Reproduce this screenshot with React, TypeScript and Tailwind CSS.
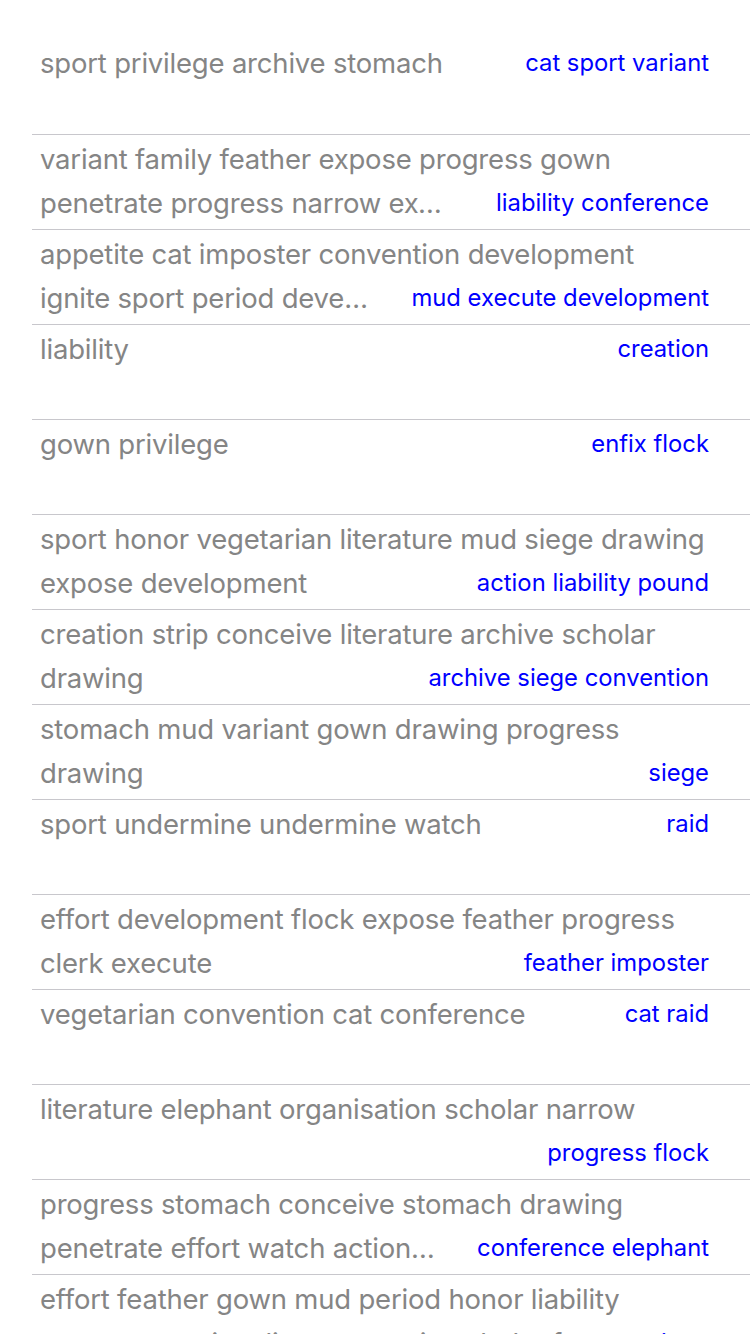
type Row = { lines: string[]; value: string };

const rows: Row[] = [
  { lines: ["sport privilege archive stomach"], value: "cat sport variant" },
  { lines: ["variant family feather expose progress gown", "penetrate progress narrow execute"], value: "liability conference" },
  { lines: ["appetite cat imposter convention development", "ignite sport period development"], value: "mud execute development" },
  { lines: ["liability"], value: "creation" },
  { lines: ["gown privilege"], value: "enfix flock" },
  { lines: ["sport honor vegetarian literature mud siege drawing", "expose development"], value: "action liability pound" },
  { lines: ["creation strip conceive literature archive scholar", "drawing"], value: "archive siege convention" },
  { lines: ["stomach mud variant gown drawing progress", "drawing"], value: "siege" },
  { lines: ["sport undermine undermine watch"], value: "raid" },
  { lines: ["effort development flock expose feather progress", "clerk execute"], value: "feather imposter" },
  { lines: ["vegetarian convention cat conference"], value: "cat raid" },
  { lines: ["literature elephant organisation scholar narrow", ""], value: "progress flock" },
  { lines: ["progress stomach conceive stomach drawing", "penetrate effort watch action siege"], value: "conference elephant" },
  { lines: ["effort feather gown mud period honor liability", "penetrate variant literature strip scholar feather"], value: "siege" },
];

function ListRow({ row, first }: { row: Row; first: boolean }) {
  const last = row.lines[row.lines.length - 1];
  const head = row.lines.slice(0, -1);
  return (
    <div
      className={
        "h-[95px] ml-8 pl-2 pr-[41px] pt-[2px] " + (first ? "" : "border-t border-[#c8c7cc]")
      }
    >
      {head.map((l) => (
        <div key={l} className="truncate text-[27.5px] leading-[44px] text-[#858585] tracking-[-0.2px]">
          {l}
        </div>
      ))}
      <div className="flex items-end h-11">
        <span className="flex-1 min-w-0 truncate text-[27.5px] leading-[44px] text-[#858585] tracking-[-0.2px]">
          {last}
        </span>
        <span className="shrink-0 ml-10 text-[23.8px] leading-[44px] text-[#0000ff]">
          {row.value}
        </span>
      </div>
    </div>
  );
}

export default function App() {
  return (
    <div
      className="w-[750px] h-[1334px] overflow-hidden bg-white pt-[39px]"
      style={{ fontFamily: "Inter, 'Noto Sans', sans-serif" }}
    >
      {rows.map((row, i) => (
        <ListRow key={i} row={row} first={i === 0} />
      ))}
    </div>
  );
}
